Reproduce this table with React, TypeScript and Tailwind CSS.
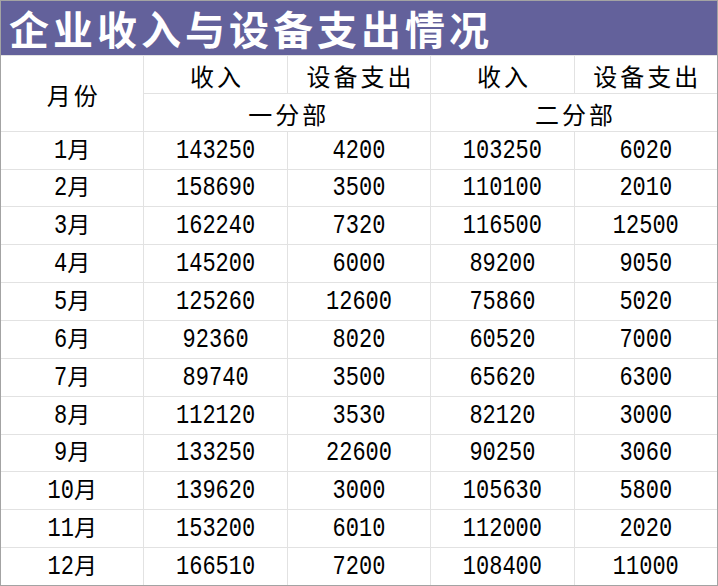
// Income vs. equipment spending per month, two departments.
const ROWS: [string, number, number, number, number][] = [
  ["1月", 143250, 4200, 103250, 6020],
  ["2月", 158690, 3500, 110100, 2010],
  ["3月", 162240, 7320, 116500, 12500],
  ["4月", 145200, 6000, 89200, 9050],
  ["5月", 125260, 12600, 75860, 5020],
  ["6月", 92360, 8020, 60520, 7000],
  ["7月", 89740, 3500, 65620, 6300],
  ["8月", 112120, 3530, 82120, 3000],
  ["9月", 133250, 22600, 90250, 3060],
  ["10月", 139620, 3000, 105630, 5800],
  ["11月", 153200, 6010, 112000, 2020],
  ["12月", 166510, 7200, 108400, 11000],
];

const cell = "flex min-h-0 items-center justify-center bg-white text-black";
const head = cell + " font-['Noto_Sans_CJK_SC',sans-serif] text-[24px] leading-none tracking-[3px] pl-[3px] pt-[3px]";
const num = "inline-block scale-y-[1.22] font-['Liberation_Mono',monospace] text-[22px] leading-none";

export default function App() {
  return (
    <div className="flex h-[586px] w-[718px] flex-col border border-[#a3a3a3] bg-white">
      <div className="flex h-[54px] shrink-0 items-center bg-[#63619b] pl-[8px]">
        <h1 className="font-['Noto_Sans_CJK_SC',sans-serif] text-[40px] font-bold leading-none tracking-[4px] text-white">
          企业收入与设备支出情况
        </h1>
      </div>
      <div className="grid h-[530px] min-h-0 grid-cols-5 grid-rows-[repeat(14,minmax(0,1fr))] gap-px border-t border-[#e2e2e2] bg-[#e2e2e2]">
        <div className={head + " row-span-2"}>月份</div>
        <div className={head}>收入</div>
        <div className={head}>设备支出</div>
        <div className={head}>收入</div>
        <div className={head}>设备支出</div>
        <div className={head + " col-span-2"}>一分部</div>
        <div className={head + " col-span-2"}>二分部</div>
        {ROWS.map(([m, a, b, c, d]) => (
          <div key={m} className="contents">
            <div className={cell + " pt-[3px]"}>
              <span className={num}>{m.slice(0, -1)}</span>
              <span className="mb-[8px] inline-block font-['Noto_Sans_CJK_SC',sans-serif] text-[23px] leading-[24px]">月</span>
            </div>
            {[a, b, c, d].map((v, i) => (
              <div key={i} className={cell + " pt-[3px]"}>
                <span className={num}>{v}</span>
              </div>
            ))}
          </div>
        ))}
      </div>
    </div>
  );
}
